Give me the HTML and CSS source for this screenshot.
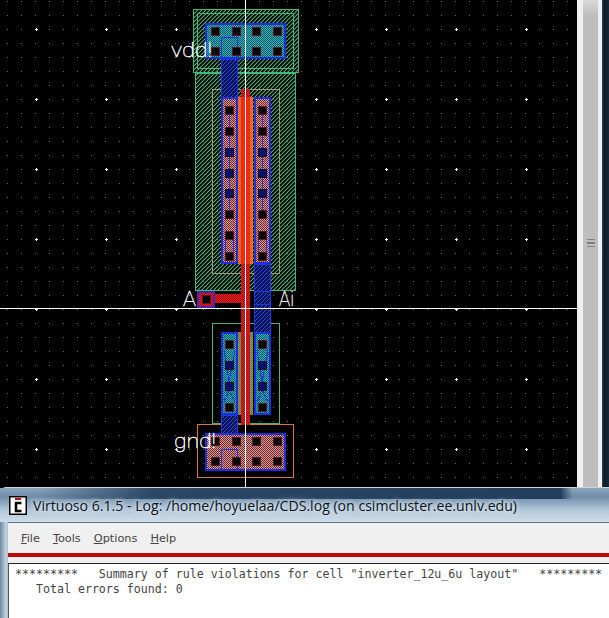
FILE: index.html
```html
<html lang="en">
<head>
  <meta charset="UTF-8">
  <meta name="viewport" content="width=device-width, initial-scale=1.0">
  <title>Virtuoso layout</title>
  <link rel="stylesheet" href="styles.css">
</head>
<body>
  <div class="layout-row">
    <svg class="canvas" width="577" height="487" viewBox="0 0 577 487">
      <defs>
        <pattern id="minorGrid" x="7" y="1" width="14" height="14" patternUnits="userSpaceOnUse">
          <rect class="grid-minor" width="1" height="1"/>
        </pattern>
        <pattern id="majorGrid" x="35" y="28" width="70" height="70" patternUnits="userSpaceOnUse">
          <rect class="grid-major" x="0" y="1" width="3" height="1"/>
          <rect class="grid-major" x="1" y="0" width="1" height="3"/>
        </pattern>
        <pattern id="hatchGreen" width="4" height="4" patternUnits="userSpaceOnUse">
          <rect class="hatch-green" x="3" y="0" width="1" height="1"/>
          <rect class="hatch-green" x="2" y="1" width="1" height="1"/>
          <rect class="hatch-green" x="1" y="2" width="1" height="1"/>
          <rect class="hatch-green" x="0" y="3" width="1" height="1"/>
          <rect class="hatch-green-dim" x="2" y="0" width="1" height="1"/>
          <rect class="hatch-green-dim" x="1" y="1" width="1" height="1"/>
          <rect class="hatch-green-dim" x="0" y="2" width="1" height="1"/>
          <rect class="hatch-green-dim" x="3" y="3" width="1" height="1"/>
        </pattern>
        <pattern id="hatchBlue" width="4" height="4" patternUnits="userSpaceOnUse">
          <rect class="hatch-blue-bg" width="4" height="4"/>
          <rect class="hatch-blue" x="3" y="0" width="1" height="1"/>
          <rect class="hatch-blue" x="2" y="1" width="1" height="1"/>
          <rect class="hatch-blue" x="1" y="2" width="1" height="1"/>
          <rect class="hatch-blue" x="0" y="3" width="1" height="1"/>
        </pattern>
        <pattern id="checkPink" width="2" height="2" patternUnits="userSpaceOnUse">
          <rect class="check-pink-a" width="2" height="2"/>
          <rect class="check-pink-b" width="1" height="1"/>
          <rect class="check-pink-b" x="1" y="1" width="1" height="1"/>
        </pattern>
        <pattern id="checkTeal" width="2" height="2" patternUnits="userSpaceOnUse">
          <rect class="check-teal-a" width="2" height="2"/>
          <rect class="check-teal-b" width="1" height="1"/>
          <rect class="check-teal-b" x="1" y="1" width="1" height="1"/>
        </pattern>
        <pattern id="checkOrange" width="2" height="2" patternUnits="userSpaceOnUse">
          <rect class="check-orange-a" width="2" height="2"/>
          <rect class="check-orange-b" width="1" height="1"/>
          <rect class="check-orange-b" x="1" y="1" width="1" height="1"/>
        </pattern>
        <pattern id="checkGreen" width="2" height="2" patternUnits="userSpaceOnUse">
          <rect class="check-green-a" width="2" height="2"/>
          <rect class="check-green-b" width="1" height="1"/>
          <rect class="check-green-b" x="1" y="1" width="1" height="1"/>
        </pattern>
        <pattern id="checkRed" width="2" height="2" patternUnits="userSpaceOnUse">
          <rect class="check-red-a" width="2" height="2"/>
          <rect class="check-red-b" width="1" height="1"/>
          <rect class="check-red-b" x="1" y="1" width="1" height="1"/>
        </pattern>
        <rect id="cut" class="cut" x="-4" y="-4" width="8" height="8"/>
        <rect id="cutBlue" class="cut-blue" x="-4" y="-4" width="8" height="8"/>
      </defs>

      <rect class="grid-fill-minor" width="577" height="487"/>
      <rect class="grid-fill-major" width="577" height="487"/>

      <!-- vdd rail -->
      <rect class="fill-hatch-green line-green" x="193.5" y="9.5" width="105" height="63"/>
      <rect class="line-green no-fill" x="197.5" y="13.5" width="96" height="55"/>
      <rect class="fill-teal line-blue" x="206" y="24" width="79" height="34"/>

      <!-- pmos well + select -->
      <rect class="fill-hatch-green line-green" x="195.5" y="73.5" width="100" height="217"/>
      <rect class="no-fill line-tan" x="212.5" y="89.5" width="67" height="184"/>

      <!-- pmos diffusion -->
      <rect class="fill-pink line-blue" x="222" y="98" width="15" height="165"/>
      <rect class="fill-pink line-blue" x="255" y="98" width="15" height="165"/>
      <rect class="fill-orange" x="238" y="97" width="15" height="167"/>

      <!-- nmos -->
      <rect class="no-fill line-green" x="212.5" y="323.5" width="67" height="100"/>
      <rect class="fill-check-green" x="238" y="332" width="15" height="83"/>
      <rect class="fill-teal line-blue" x="222" y="333" width="15" height="81"/>
      <rect class="fill-teal line-blue" x="255" y="333" width="15" height="81"/>

      <!-- gnd rail -->
      <rect class="no-fill line-orange" x="197.5" y="424.5" width="96" height="53"/>
      <rect class="fill-pink line-blue" x="206" y="434" width="79" height="36"/>

      <!-- metal straps -->
      <rect class="fill-hatch-blue line-blue-thin" x="221.5" y="59.5" width="16" height="38"/>
      <rect class="no-fill line-blue-thin" x="221.5" y="37.5" width="16" height="22"/>
      <rect class="fill-hatch-blue line-blue-thin" x="221.5" y="415.5" width="16" height="18"/>
      <rect class="no-fill line-blue-thin" x="221.5" y="449.5" width="16" height="21"/>
      <rect class="fill-hatch-blue line-blue-thin" x="254.5" y="264.5" width="16" height="68"/>
      <path class="line-blue-thin no-fill" d="M254 291.5H271M254 304.5H271"/>

      <!-- poly gate -->
      <rect class="fill-check-red" x="241" y="89" width="9" height="336"/>
      <rect class="fill-solid-red" x="241" y="97" width="9" height="167"/>
      <rect class="fill-check-red" x="215" y="294" width="26" height="9"/>

      <!-- gate contact -->
      <rect class="fill-check-red line-purple" x="198" y="292" width="16" height="15"/>
      <rect class="cut" x="202" y="295" width="8" height="8"/>

      <!-- local interconnect inside the fingers -->
      <path class="line-blue-thin no-fill" d="M229.5 114V148M262.5 114V148M229.5 156V210M262.5 156V210M225.5 239V253M233.5 239V253M258.5 239V253M266.5 239V253"/>
      <path class="line-blue-thin no-fill" d="M224 350L229 382M235 350L229 382M257 350L262 382M268 350L262 382M229 390L224 402M229 390L235 402M262 390L257 402M262 390L268 402"/>

      <!-- contacts -->
      <use href="#cut" x="215" y="31"/><use href="#cut" x="236" y="31"/><use href="#cut" x="256" y="31"/><use href="#cut" x="277" y="31"/>
      <use href="#cut" x="215" y="51"/><use href="#cut" x="236" y="51"/><use href="#cut" x="256" y="51"/><use href="#cut" x="277" y="51"/>

      <use href="#cut" x="229" y="110"/><use href="#cut" x="229" y="131"/><use href="#cutBlue" x="229" y="152"/><use href="#cutBlue" x="229" y="173"/>
      <use href="#cutBlue" x="229" y="193"/><use href="#cut" x="229" y="214"/><use href="#cut" x="229" y="235"/><use href="#cut" x="229" y="256"/>
      <use href="#cut" x="262" y="110"/><use href="#cut" x="262" y="131"/><use href="#cutBlue" x="262" y="152"/><use href="#cutBlue" x="262" y="173"/>
      <use href="#cutBlue" x="262" y="193"/><use href="#cut" x="262" y="214"/><use href="#cut" x="262" y="235"/><use href="#cut" x="262" y="256"/>

      <use href="#cut" x="229" y="344"/><use href="#cutBlue" x="229" y="365"/><use href="#cutBlue" x="229" y="386"/><use href="#cut" x="229" y="407"/>
      <use href="#cut" x="262" y="344"/><use href="#cutBlue" x="262" y="365"/><use href="#cutBlue" x="262" y="386"/><use href="#cut" x="262" y="407"/>

      <use href="#cut" x="215" y="441"/><use href="#cut" x="236" y="441"/><use href="#cut" x="256" y="441"/><use href="#cut" x="277" y="441"/>
      <use href="#cut" x="215" y="461"/><use href="#cut" x="236" y="461"/><use href="#cut" x="256" y="461"/><use href="#cut" x="277" y="461"/>

      <!-- axes -->
      <path class="axis" d="M245.5 0V497M0 308.5H577"/>

      <!-- pin labels -->
      <text class="pin" x="171" y="57" textLength="41" lengthAdjust="spacingAndGlyphs">vdd!</text>
      <text class="pin" x="183" y="306" textLength="13" lengthAdjust="spacingAndGlyphs">A</text>
      <text class="pin" x="279" y="306" textLength="15" lengthAdjust="spacingAndGlyphs">Ai</text>
      <text class="pin" x="174" y="448" textLength="42" lengthAdjust="spacingAndGlyphs">gnd!</text>
    </svg>
    <div class="scrollbar">
      <div class="scroll-thumb">
        <span class="grip"></span>
      </div>
    </div>
    <div class="desk-edge"></div>
  </div>

  <div class="window">
    <div class="titlebar">
      <svg class="app-icon" width="18" height="19" viewBox="0 0 18 19">
        <rect class="app-icon-bg" x="0.5" y="0.5" width="17" height="18"/>
        <rect class="app-icon-bar" x="6" y="2" width="6" height="2"/>
        <path class="app-icon-c" d="M12.5 7H7V15H12.5"/>
      </svg>
      <span class="title-text">Virtuoso 6.1.5 - Log: /home/hoyuelaa/CDS.log (on csimcluster.ee.unlv.edu)</span>
    </div>
    <div class="client">
      <div class="menubar">
        <span class="menu-item"><u>F</u>ile</span>
        <span class="menu-item"><u>T</u>ools</span>
        <span class="menu-item"><u>O</u>ptions</span>
        <span class="menu-item"><u>H</u>elp</span>
      </div>
      <div class="red-rule"></div>
      <pre class="log">*********   Summary of rule violations for cell "inverter_12u_6u layout"   *********
   Total errors found: 0</pre>
    </div>
  </div>
</body>
</html>
```
FILE: styles.css
```css
html, body { margin: 0; padding: 0; }
body {
  width: 609px;
  height: 618px;
  overflow: hidden;
  background-color: #000;
  font-family: "Open Sans", sans-serif;
}

/* top part: layout editor canvas */
.layout-row { display: flex; height: 487px; }
.canvas { display: block; flex: none; background-color: #000; shape-rendering: crispEdges; }
.scrollbar {
  width: 25px;
  flex: none;
  padding: 0 4px 0 6px;
  box-sizing: border-box;
  background-color: #f0f0f0;
}
.scroll-thumb {
  height: 100%;
  display: flex;
  align-items: flex-start;
  justify-content: center;
  padding-top: 239px;
  box-sizing: border-box;
  background: linear-gradient(#d8d8d8 0, #bebebe 16px);
}
.grip {
  width: 8px;
  height: 6px;
  border-top: 1px solid #808080;
  border-bottom: 1px solid #808080;
  background: linear-gradient(#bebebe 40%, #808080 40%, #808080 60%, #bebebe 60%);
}
.desk-edge {
  flex: 1;
  background: linear-gradient(90deg, #3a4652 0, #0b1a28 30%, #16283a 100%);
}

/* svg layers */
.grid-minor { fill: #6a6a6a; }
.grid-major { fill: #fff; }
.grid-fill-minor { fill: url(#minorGrid); }
.grid-fill-major { fill: url(#majorGrid); }
.hatch-green { fill: #3cb072; }
.hatch-green-dim { fill: #15502f; }
.hatch-blue-bg { fill: #0a1260; }
.hatch-blue { fill: #2f50c8; }
.check-pink-a { fill: #d8a080; }
.check-pink-b { fill: #702440; }
.check-teal-a { fill: #38b0b0; }
.check-teal-b { fill: #0f5a70; }
.check-orange-a { fill: #f58a1e; }
.check-orange-b { fill: #e8421a; }
.check-green-a { fill: #30c080; }
.check-green-b { fill: #c84a28; }
.check-red-a { fill: #f02010; }
.check-red-b { fill: #9a1020; }
.cut { fill: #060608; stroke: #5a1a22; stroke-width: 1; }
.cut-blue { fill: #0a0f70; stroke: #141414; stroke-width: 1; }

.no-fill { fill: none; }
.fill-hatch-green { fill: url(#hatchGreen); }
.fill-hatch-blue { fill: url(#hatchBlue); }
.fill-pink { fill: url(#checkPink); }
.fill-teal { fill: url(#checkTeal); }
.fill-orange { fill: url(#checkOrange); }
.fill-check-green { fill: url(#checkGreen); }
.fill-check-red { fill: url(#checkRed); }
.fill-solid-red { fill: #ee2a12; }
.line-green { stroke: #3fb878; stroke-width: 1; }
.line-tan { stroke: #b0985a; stroke-width: 1; }
.line-orange { stroke: #d8782a; stroke-width: 1; }
.line-blue { stroke: #1a30e0; stroke-width: 2; }
.line-blue-thin { stroke: #1f35e0; stroke-width: 1; }
.line-purple { stroke: #4a22b8; stroke-width: 2; }
.axis { stroke: #fff; stroke-width: 1; fill: none; }
.pin {
  fill: #fff;
  stroke: #fff;
  stroke-width: 0.35;
  font-family: "Roboto", sans-serif;
  font-size: 21px;
  font-weight: 100;
  shape-rendering: auto;
}

/* bottom part: log window */
.window {
  height: 131px;
  box-sizing: border-box;
  padding-left: 8px;
  border-top: 1px solid #c8d4de;
  border-top-left-radius: 6px;
  background: linear-gradient(90deg, #6d8aa3 0, #c3d2df 6px, rgba(0,0,0,0) 8px);
  background-color: #a9bfd2;
}
.titlebar {
  height: 34px;
  margin-left: -8px;
  display: flex;
  align-items: center;
  gap: 6px;
  padding: 0 0 0 9px;
  box-sizing: border-box;
  background:
    linear-gradient(90deg, rgba(24,52,84,0) 6%, rgba(24,52,84,0.8) 25%, rgba(24,52,84,0.9) 92%, rgba(24,52,84,0) 94%) 0 0 / 100% 11px no-repeat,
    linear-gradient(#8ea5ba 0, #6f8ca8 25%, #b2c7d9 65%, #cfdde8 100%);
}
.app-icon { flex: none; }
.app-icon-bg { fill: #fff; stroke: #000; stroke-width: 2; }
.app-icon-bar { fill: #b8141c; }
.app-icon-c { fill: none; stroke: #000; stroke-width: 2.5; }
.title-text {
  font-size: 14.1px;
  color: #0c1218;
  white-space: nowrap;
  text-shadow: 0 0 4px #e6eef5, 0 0 6px #e6eef5;
}
.client {
  height: 96px;
  background-color: #f0f0f0;
  border-top: 1px solid #5e7285;
  box-sizing: border-box;
}
.menubar {
  height: 30px;
  display: flex;
  align-items: center;
  gap: 13px;
  padding-left: 13px;
  box-sizing: border-box;
}
.menu-item { font-family: "DejaVu Sans", sans-serif; font-size: 11.3px; color: #444; }
.red-rule { height: 4px; background-color: #bf0a0a; }
.log {
  margin: 6px 0 0 0;
  padding: 3px 0 0 6px;
  height: 60px;
  border-top: 1px solid #222;
  border-left: 1px solid #555;
  background-color: #fff;
  font-family: "DejaVu Sans Mono", monospace;
  font-size: 11.62px;
  line-height: 15px;
  color: #444;
  white-space: pre;
  overflow: hidden;
}
```
